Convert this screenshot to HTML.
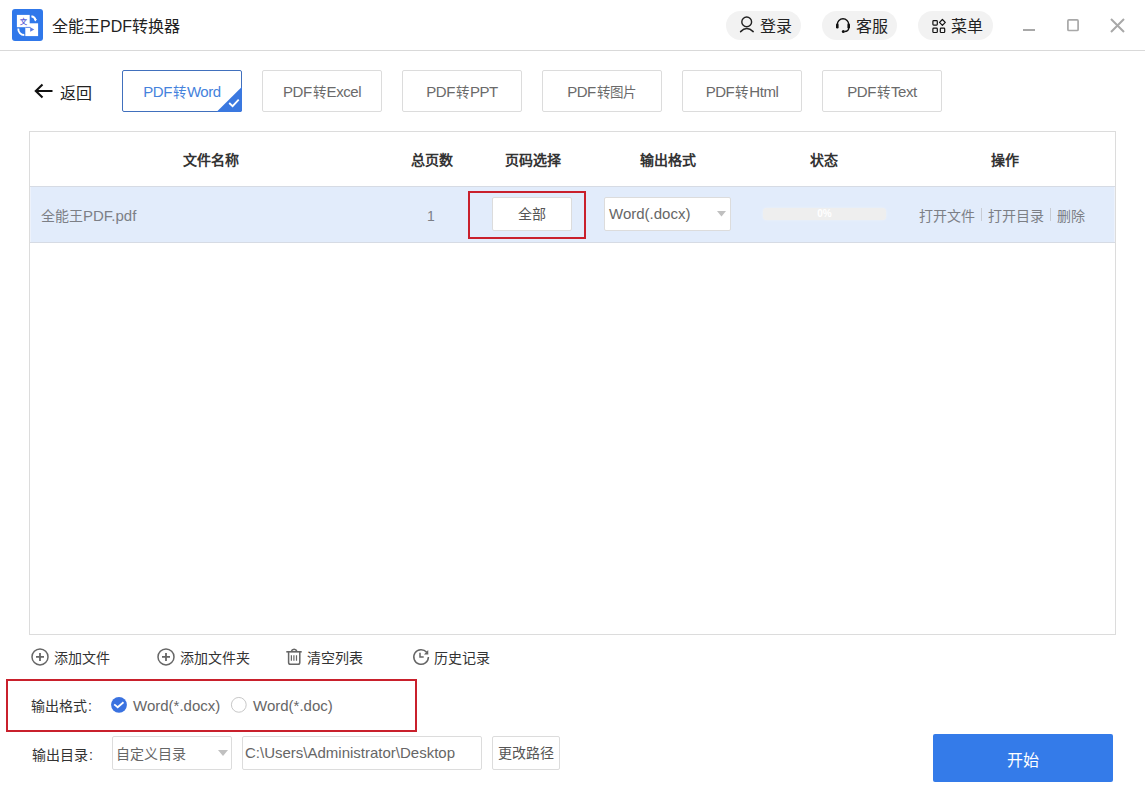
<!DOCTYPE html>
<html lang="zh-CN">
<head>
<meta charset="utf-8">
<style>
*{margin:0;padding:0;box-sizing:border-box;}
html,body{width:1145px;height:810px;overflow:hidden;background:#fff;}
body{font-family:"Liberation Sans",sans-serif;color:#333;position:relative;}
.a{position:absolute;white-space:nowrap;}
.t{line-height:20px;height:20px;}
svg{position:absolute;overflow:visible;}
.hdr-line{left:0;top:50px;width:1145px;height:1px;background:#d9d9d9;}
.logo{left:12px;top:9px;width:31px;height:32px;background:#3078ea;border-radius:3px;}
.title{left:52px;top:17px;font-size:16px;color:#222;}
.pill{top:11px;height:29px;width:75px;border-radius:15px;background:#f2f2f2;}
.pilltxt{font-size:16px;color:#222;top:17px;}
.tab{top:70px;width:120px;height:42px;border:1px solid #dcdcdc;border-radius:2px;background:#fff;font-size:14px;color:#6a6a6a;text-align:center;line-height:41px;}
.L{font-size:15px;letter-spacing:-0.45px;}
.C{font-size:13.5px;margin:0 1px;}
.tab.on{border-color:#4170bd;color:#4582dc;overflow:hidden;}
.table{left:29px;top:131px;width:1087px;height:504px;border:1px solid #dcdcdc;}
.th{top:150px;font-size:14px;font-weight:bold;color:#333;}
.row{left:30px;top:186px;width:1085px;height:57px;background:#edf2fb;border-top:1px solid #d6dbe4;border-bottom:1px solid #d6dbe4;}
.rowfill{left:31px;top:187px;width:1083px;height:55px;background:#e2ecfb;}
.td{font-size:14px;color:#7c7f86;top:206px;}
.tb{font-size:14px;color:#333;}
.box{background:#fff;border:1px solid #dcdcdc;border-radius:2px;}
</style>
</head>
<body>
<!-- header -->
<div class="a logo">
  <svg width="31" height="32" viewBox="0 0 31 32" style="left:0;top:0">
    <rect x="13.3" y="14.3" width="12.8" height="12.8" fill="#fff"/>
    <rect x="4.9" y="5.9" width="12.8" height="12.3" fill="#fff"/>
    <path d="M13.3 18.4 H18.5" stroke="#4d78e6" stroke-width="0.9"/>
    <path d="M18.2 18.2 L22.3 20.5 L18.2 22.8 Z" fill="#5a7ce6"/>
    <text x="11.3" y="14.6" font-size="7" fill="#5860d6" text-anchor="middle" font-weight="bold">文</text>
    <path d="M19.4 7.3 A5.2 5.2 0 0 1 23.6 11.2" stroke="#fff" stroke-width="1.9" fill="none"/>
    <path d="M22 10.5 L24.8 10 L23.6 12.6 Z" fill="#fff"/>
    <path d="M6.3 19.5 A6 6 0 0 0 12.3 26" stroke="#fff" stroke-width="1.9" fill="none"/>
  </svg>
</div>
<div class="a title t">全能王PDF转换器</div>

<div class="a pill" style="left:726px"></div>
<div class="a pill" style="left:822px"></div>
<div class="a pill" style="left:918px"></div>
<svg width="20" height="20" style="left:736px;top:14px">
  <circle cx="10.7" cy="7.9" r="4.9" stroke="#222" stroke-width="1.4" fill="none"/>
  <path d="M4.6 17.6 Q10.7 11.5 17.2 17.6" stroke="#222" stroke-width="1.5" fill="none" stroke-linecap="round"/>
</svg>
<div class="a pilltxt t" style="left:760px">登录</div>
<svg width="20" height="20" style="left:830px;top:14px">
  <path d="M7.3 12.5 V10.5 A5.7 5.7 0 0 1 18.7 10.5 V14 Q18.7 17.4 14.5 17.5" stroke="#111" stroke-width="1.4" fill="none"/>
  <rect x="6" y="9.5" width="2.6" height="5" rx="1.2" fill="#111"/>
  <rect x="17.4" y="9.5" width="2.6" height="5" rx="1.2" fill="#111"/>
  <circle cx="13.3" cy="17.5" r="1.5" fill="#111"/>
</svg>
<div class="a pilltxt t" style="left:856px">客服</div>
<svg width="20" height="20" style="left:926px;top:14px">
  <rect x="6.9" y="6.7" width="4.4" height="4.4" rx="0.8" stroke="#111" stroke-width="1.2" fill="none"/>
  <rect x="6.9" y="14.1" width="4.4" height="4.4" rx="0.8" stroke="#111" stroke-width="1.2" fill="none"/>
  <rect x="14.3" y="14.1" width="4.4" height="4.4" rx="0.8" stroke="#111" stroke-width="1.2" fill="none"/>
  <path d="M16.4 5.5 L19.3 8.4 L16.4 11.3 L13.5 8.4 Z" stroke="#111" stroke-width="1.2" fill="none" stroke-linejoin="round"/>
</svg>
<div class="a pilltxt t" style="left:951px">菜单</div>

<!-- window controls -->
<div class="a" style="left:1023px;top:29px;width:12px;height:2px;background:#a8a8a8"></div>
<svg width="14" height="14" style="left:1066px;top:18px"><rect x="1.9" y="1.9" width="10.2" height="10.6" rx="1" stroke="#a8a8a8" stroke-width="1.7" fill="none"/></svg>
<svg width="16" height="16" style="left:1110px;top:18px">
  <path d="M1 1 L14 14 M14 1 L1 14" stroke="#a8a8a8" stroke-width="2"/>
</svg>

<div class="a hdr-line"></div>

<!-- back -->
<svg width="22" height="18" style="left:33px;top:82px">
  <path d="M19.5 9 H3 M9.5 2.5 L2.8 9 L9.5 15.5" stroke="#111" stroke-width="2.1" fill="none"/>
</svg>
<div class="a t" style="left:60px;top:84px;font-size:16px;color:#222">返回</div>

<div class="a tab on" style="left:122px"><span class="L">PDF</span><span class="C">转</span><span class="L">Word</span></div>
<svg width="27" height="27" style="left:216px;top:86px">
  <path d="M0.5 26 L26 0.8 L26 24 Q26 26 24 26 Z" fill="#3a78e0"/>
  <path d="M13.2 17 L16.6 20.2 L22.7 13.7" stroke="#fff" stroke-width="1.8" fill="none"/>
</svg>
<div class="a tab" style="left:262px"><span class="L">PDF</span><span class="C">转</span><span class="L">Excel</span></div>
<div class="a tab" style="left:402px"><span class="L">PDF</span><span class="C">转</span><span class="L">PPT</span></div>
<div class="a tab" style="left:542px"><span class="L">PDF</span><span class="C">转图片</span></div>
<div class="a tab" style="left:682px"><span class="L">PDF</span><span class="C">转</span><span class="L">Html</span></div>
<div class="a tab" style="left:822px"><span class="L">PDF</span><span class="C">转</span><span class="L">Text</span></div>

<!-- table -->
<div class="a table"></div>
<div class="a th t" style="left:183px">文件名称</div>
<div class="a th t" style="left:411px">总页数</div>
<div class="a th t" style="left:505px">页码选择</div>
<div class="a th t" style="left:640px">输出格式</div>
<div class="a th t" style="left:810px">状态</div>
<div class="a th t" style="left:991px">操作</div>
<div class="a row"></div>
<div class="a rowfill"></div>
<div class="a td t" style="left:41px">全能王<span style="font-size:15px">PDF.pdf</span></div>
<div class="a td t" style="left:427px">1</div>
<div class="a" style="left:468px;top:191px;width:118px;height:48px;border:2px solid #c9202c"></div>
<div class="a box" style="left:492px;top:197px;width:80px;height:34px;font-size:14px;color:#555;text-align:center;line-height:32px">全部</div>
<div class="a box" style="left:604px;top:197px;width:127px;height:34px;font-size:15px;color:#666;line-height:32px;padding-left:4px">Word(.docx)
  <svg width="10" height="6" style="left:112px;top:13px"><path d="M0 0 H9 L4.5 5.5 Z" fill="#c0c0c0"/></svg>
</div>
<div class="a" style="left:763px;top:208px;width:123px;height:12px;background:#eeeeee;border-radius:4px;box-shadow:0 0 2px #f2f2f2;font-size:10px;font-weight:bold;color:#fff;text-align:center;line-height:12px">0%</div>
<div class="a td t" style="left:919px">打开文件</div>
<div class="a" style="left:981px;top:208px;width:1px;height:13px;background:#c8ccd4"></div>
<div class="a td t" style="left:988px">打开目录</div>
<div class="a" style="left:1050px;top:208px;width:1px;height:13px;background:#c8ccd4"></div>
<div class="a td t" style="left:1057px">删除</div>

<!-- bottom toolbar -->
<svg width="20" height="20" style="left:30px;top:647px">
  <circle cx="10" cy="9.9" r="8" stroke="#666" stroke-width="1.5" fill="none"/>
  <path d="M6 9.9 H14 M10 5.9 V13.9" stroke="#666" stroke-width="1.8"/>
</svg>
<div class="a tb t" style="left:54px;top:648px">添加文件</div>
<svg width="20" height="20" style="left:156px;top:647px">
  <circle cx="10" cy="9.9" r="8" stroke="#666" stroke-width="1.5" fill="none"/>
  <path d="M6 9.9 H14 M10 5.9 V13.9" stroke="#666" stroke-width="1.8"/>
</svg>
<div class="a tb t" style="left:180px;top:648px">添加文件夹</div>
<svg width="20" height="20" style="left:284px;top:646px">
  <path d="M2.3 5.8 H17.7" stroke="#666" stroke-width="1.6"/>
  <path d="M7.3 5.5 A2.9 2.9 0 0 1 12.9 5.5" stroke="#666" stroke-width="1.5" fill="none"/>
  <path d="M4.6 6 V16.5 Q4.6 18.3 6.4 18.3 H14 Q15.8 18.3 15.8 16.5 V6" stroke="#666" stroke-width="1.5" fill="none"/>
  <path d="M7.4 9.2 V14.8 M9.9 9.2 V14.8 M12.5 9.2 V14.8" stroke="#666" stroke-width="1.2"/>
</svg>
<div class="a tb t" style="left:307px;top:648px">清空列表</div>
<svg width="20" height="20" style="left:411px;top:647px"><g transform="translate(-0.6,-0.5)">
  <path d="M18 10.5 A7.3 7.3 0 1 1 16.3 5.8" stroke="#666" stroke-width="1.5" fill="none"/>
  <path d="M17.8 3.6 L17.9 8 L13.6 7.9 Z" fill="#666"/>
  <path d="M9.6 6.3 V10.6 H13.3" stroke="#666" stroke-width="1.5" fill="none"/>
</g></svg>
<div class="a tb t" style="left:434px;top:648px">历史记录</div>

<!-- output format -->
<div class="a" style="left:6px;top:679px;width:411px;height:53px;border:2px solid #c9202c"></div>
<div class="a tb t" style="left:31px;top:696px">输出格式<span style="margin-left:1px">:</span></div>
<svg width="20" height="20" style="left:109px;top:695px">
  <circle cx="10" cy="9.84" r="7.9" fill="#3a72e0"/>
  <path d="M5.2 9.4 L8.7 12.3 L14.5 7.3" stroke="#fff" stroke-width="1.8" fill="none"/>
</svg>
<div class="a t" style="left:133px;top:696px;font-size:15px;color:#666">Word(*.docx)</div>
<svg width="20" height="20" style="left:229px;top:695px">
  <circle cx="9.8" cy="9.84" r="7.4" stroke="#c8c8c8" stroke-width="1" fill="none"/>
</svg>
<div class="a t" style="left:253px;top:696px;font-size:15px;color:#666">Word(*.doc)</div>

<!-- output dir -->
<div class="a tb t" style="left:32px;top:745px">输出目录<span style="margin-left:1px">:</span></div>
<div class="a box" style="left:112px;top:736px;width:120px;height:34px;font-size:14px;color:#666;line-height:34px;padding-left:3px">自定义目录
  <svg width="10" height="6" style="left:105px;top:13px"><path d="M0 0 H10 L5 6 Z" fill="#c0c0c0"/></svg>
</div>
<div class="a box" style="left:242px;top:736px;width:240px;height:34px;font-size:15px;color:#666;line-height:32px;padding-left:2px">C:\Users\Administrator\Desktop</div>
<div class="a box" style="left:492px;top:736px;width:68px;height:34px;font-size:14px;color:#555;line-height:32px;text-align:center">更改路径</div>

<div class="a" style="left:933px;top:734px;width:180px;height:48px;background:#347be9;border-radius:2px;color:#fff;font-size:16px;text-align:center;line-height:53px;overflow:hidden">开始</div>
</body>
</html>
